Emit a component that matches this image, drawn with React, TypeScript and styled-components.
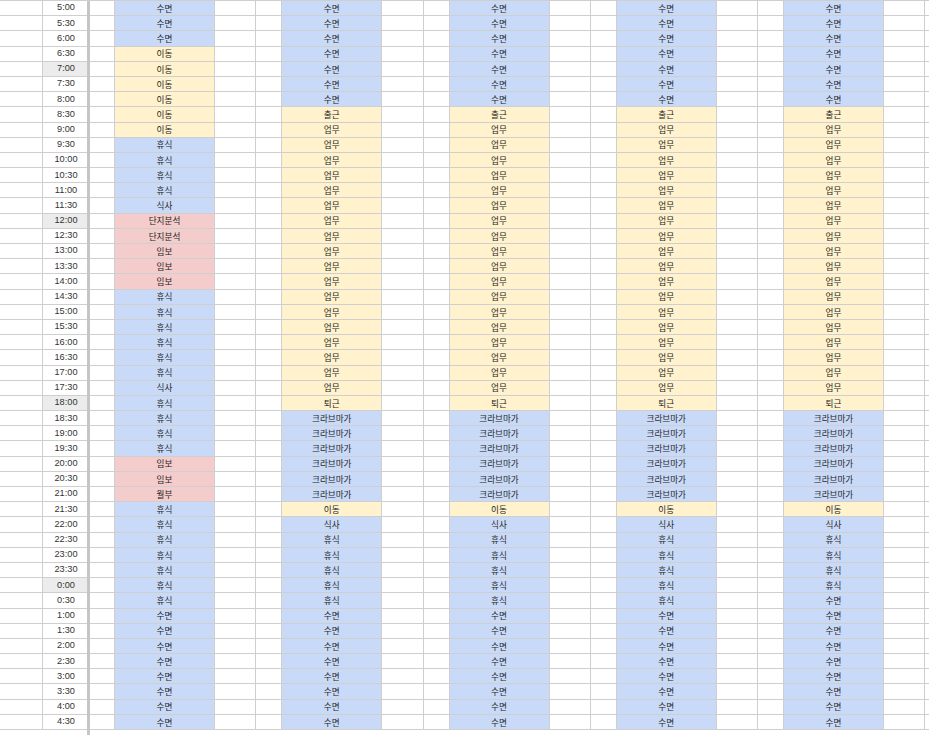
import React from "react";
import styled, { createGlobalStyle } from "styled-components";

type Tone = "blue" | "yellow" | "red";
type Slot = [string, Tone];

const GlobalStyle = createGlobalStyle`
  html, body {
    margin: 0;
    padding: 0;
    background: #ffffff;
    overflow: hidden;
  }
  body {
    font-family: "Liberation Sans", "Noto Sans CJK KR", Arial, sans-serif;
  }
`;

const fills: Record<Tone, string> = {
  blue: "#c9daf8",
  yellow: "#fff2cc",
  red: "#f4cccc",
};

const LINE = "#cfcfcf";
const COLUMNS = "43px 44px 3px 25px repeat(5, 100px 41.25px 26px)";

const Sheet = styled.div`
  display: flex;
  flex-direction: column;
  width: 960px;
  border-top: 1px solid ${LINE};
`;

const Row = styled.div`
  display: grid;
  grid-template-columns: ${COLUMNS};
  height: 15.1875px;
`;

const Tail = styled(Row)`
  height: 6px;
`;

const Cell = styled.div<{ $tone?: Tone }>`
  box-sizing: border-box;
  display: flex;
  align-items: center;
  justify-content: center;
  border-right: 1px solid ${LINE};
  border-bottom: 1px solid ${LINE};
  background: ${(p) => (p.$tone ? fills[p.$tone] : "#ffffff")};
  font-family: "Noto Sans CJK KR", "Liberation Sans", sans-serif;
  font-size: 8.6px;
  line-height: 1;
  color: #262626;
  white-space: nowrap;
  overflow: hidden;
`;

const TimeCell = styled(Cell)<{ $mark?: boolean }>`
  font-family: "Liberation Sans", Arial, sans-serif;
  font-size: 9.2px;
  color: #333333;
  border-right: none;
  padding-left: 2px;
  background: ${(p) => (p.$mark ? "#ececec" : "#ffffff")};
`;

const Frozen = styled.div`
  background: #c6c6c6;
`;

const Blank = styled.div``;

const run = (label: string, tone: Tone, n: number): Slot[] =>
  Array.from({ length: n }, () => [label, tone] as Slot);

const times: string[] = Array.from({ length: 48 }, (_, i) => {
  const h = (5 + Math.floor(i / 2)) % 24;
  return `${h}:${i % 2 ? "30" : "00"}`;
});

const marked = new Set(["7:00", "12:00", "18:00", "0:00"]);

const holiday: Slot[] = [
  ...run("수면", "blue", 3),
  ...run("이동", "yellow", 6),
  ...run("휴식", "blue", 4),
  ...run("식사", "blue", 1),
  ...run("단지분석", "red", 2),
  ...run("임보", "red", 3),
  ...run("휴식", "blue", 6),
  ...run("식사", "blue", 1),
  ...run("휴식", "blue", 4),
  ...run("임보", "red", 2),
  ...run("월부", "red", 1),
  ...run("휴식", "blue", 7),
  ...run("수면", "blue", 8),
];

const workday = (lateRest: number): Slot[] => [
  ...run("수면", "blue", 7),
  ...run("출근", "yellow", 1),
  ...run("업무", "yellow", 18),
  ...run("퇴근", "yellow", 1),
  ...run("크라브마가", "blue", 6),
  ...run("이동", "yellow", 1),
  ...run("식사", "blue", 1),
  ...run("휴식", "blue", lateRest),
  ...run("수면", "blue", 13 - lateRest),
];

const days: Slot[][] = [holiday, workday(5), workday(5), workday(5), workday(4)];

const App: React.FC = () => {
  return (
    <>
      <GlobalStyle />
      <Sheet>
        {times.map((time, i) => (
          <Row key={time}>
            <Cell />
            <TimeCell $mark={marked.has(time)}>{time}</TimeCell>
            <Frozen />
            <Cell />
            {days.map((day, d) => (
              <React.Fragment key={d}>
                <Cell $tone={day[i][1]}>{day[i][0]}</Cell>
                <Cell />
                <Cell />
              </React.Fragment>
            ))}
          </Row>
        ))}
        <Tail>
          <Blank />
          <Blank />
          <Frozen />
        </Tail>
      </Sheet>
    </>
  );
};

export default App;
